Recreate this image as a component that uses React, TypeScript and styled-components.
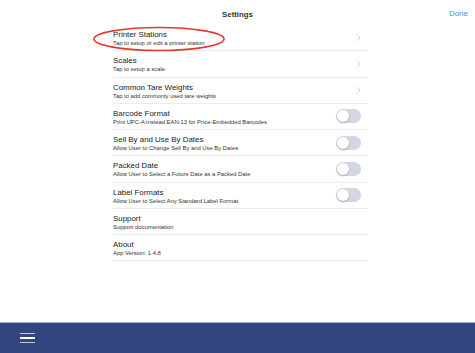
import styled, { createGlobalStyle } from "styled-components";

const GlobalStyle = createGlobalStyle`
  html, body {
    margin: 0;
    padding: 0;
    height: 100%;
    background: #ffffff;
  }
  #root {
    height: 100%;
  }
  * {
    box-sizing: border-box;
  }
`;

type Setting = {
  title: string;
  subtitle: string;
  control?: "chevron" | "toggle";
};

const settings: Setting[] = [
  { title: "Printer Stations", subtitle: "Tap to setup or edit a printer station", control: "chevron" },
  { title: "Scales", subtitle: "Tap to setup a scale", control: "chevron" },
  { title: "Common Tare Weights", subtitle: "Tap to add commonly used tare weights", control: "chevron" },
  { title: "Barcode Format", subtitle: "Print UPC-A instead EAN-13 for Price-Embedded Barcodes", control: "toggle" },
  { title: "Sell By and Use By Dates", subtitle: "Allow User to Change Sell By and Use By Dates", control: "toggle" },
  { title: "Packed Date", subtitle: "Allow User to Select a Future Date as a Packed Date", control: "toggle" },
  { title: "Label Formats", subtitle: "Allow User to Select Any Standard Label Format", control: "toggle" },
  { title: "Support", subtitle: "Support documentation" },
  { title: "About", subtitle: "App Version: 1.4.8" },
];

export default function App() {
  return (
    <>
      <GlobalStyle />
      <Screen>
        <Header>
          <HeaderTitle>Settings</HeaderTitle>
          <DoneButton>Done</DoneButton>
        </Header>
        <Main>
          <List>
            <Highlight width="134" height="26" viewBox="0 0 134 26">
              <ellipse cx="67" cy="13" rx="65" ry="11.5" fill="none" stroke="#e6382a" strokeWidth="1.7" />
            </Highlight>
            {settings.map((s) => (
              <Row key={s.title}>
                <RowText>
                  <RowTitle>{s.title}</RowTitle>
                  <RowSubtitle>{s.subtitle}</RowSubtitle>
                </RowText>
                {s.control === "chevron" && (
                  <svg width="5" height="8" viewBox="0 0 5 8">
                    <path d="M1 1 L4 4 L1 7" fill="none" stroke="#cfcfd3" strokeWidth="0.9" />
                  </svg>
                )}
                {s.control === "toggle" && (
                  <Toggle>
                    <Knob />
                  </Toggle>
                )}
              </Row>
            ))}
          </List>
        </Main>
        <BottomBar>
          <MenuIcon>
            <MenuLine />
            <MenuLine $bright />
            <MenuLine />
          </MenuIcon>
        </BottomBar>
      </Screen>
    </>
  );
}

const Screen = styled.div`
  display: flex;
  flex-direction: column;
  height: 100%;
  font-family: "Liberation Sans", Arial, sans-serif;
  color: #1c1c1e;
`;

const Header = styled.div`
  position: relative;
  display: flex;
  align-items: center;
  justify-content: center;
  height: 25px;
  padding-top: 3px;
`;

const HeaderTitle = styled.div`
  font-size: 7.8px;
  font-weight: 700;
  color: #333333;
`;

const DoneButton = styled.div`
  position: absolute;
  right: 7px;
  top: 9px;
  font-size: 8px;
  color: #4a90e2;
`;

const Main = styled.div`
  flex: 1;
`;

const List = styled.div`
  position: relative;
  width: 255px;
  margin-left: 113px;
`;

const Highlight = styled.svg`
  position: absolute;
  left: -21px;
  top: 1px;
  pointer-events: none;
`;

const Row = styled.div`
  display: flex;
  align-items: center;
  justify-content: space-between;
  height: 26.25px;
  padding-right: 7px;
  border-bottom: 1px solid #ebebeb;
`;

const RowText = styled.div`
  display: flex;
  flex-direction: column;
  gap: 1px;
  padding-top: 2px;
`;

const RowTitle = styled.div`
  font-size: 7.9px;
  line-height: 9px;
  color: #222222;
`;

const RowSubtitle = styled.div`
  font-size: 5.85px;
  line-height: 7px;
  color: #333333;
`;

const Toggle = styled.div`
  position: relative;
  width: 25px;
  height: 14px;
  border-radius: 7px;
  background: #d3d7e4;
`;

const Knob = styled.div`
  position: absolute;
  left: 1px;
  top: 1px;
  width: 12px;
  height: 12px;
  border-radius: 50%;
  background: #ffffff;
  box-shadow: 0 1px 2px rgba(0, 0, 0, 0.25);
`;

const BottomBar = styled.div`
  display: flex;
  align-items: center;
  height: 31px;
  padding-left: 20px;
  background: #33457f;
  border-top: 1px solid #aab1c4;
`;

const MenuIcon = styled.div`
  display: flex;
  flex-direction: column;
  gap: 3px;
  width: 15px;
`;

const MenuLine = styled.div<{ $bright?: boolean }>`
  height: 1.5px;
  background: ${(p) => (p.$bright ? "#ffffff" : "#c4c9dc")};
`;
